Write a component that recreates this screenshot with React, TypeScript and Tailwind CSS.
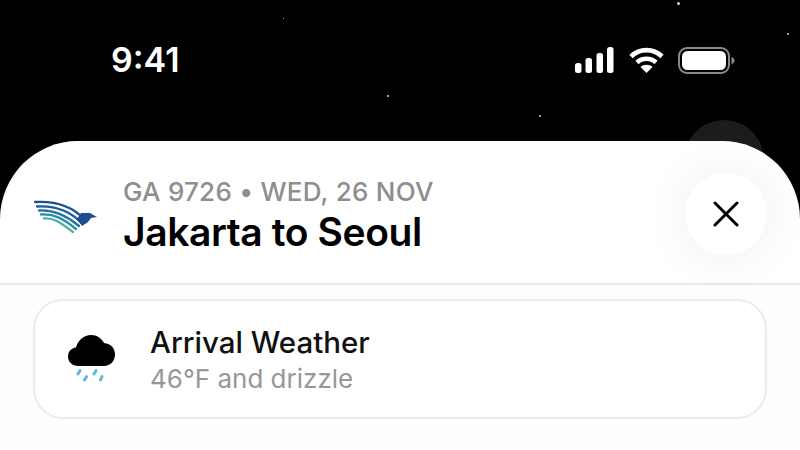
const stars = [
  [677, 2, 3],
  [787, 33, 2],
  [283, 18, 1],
  [387, 95, 2],
  [539, 115, 2],
];

const SignalIcon = () => (
  <svg width="40" height="26" viewBox="0 0 40 26" fill="white">
    <rect x="0" y="16" width="6.5" height="10" rx="2.5" />
    <rect x="10.5" y="11" width="6.5" height="15" rx="2.5" />
    <rect x="21.5" y="6" width="6.5" height="20" rx="2.5" />
    <rect x="32" y="0" width="6.5" height="26" rx="2.5" />
  </svg>
);

const WifiIcon = () => (
  <svg width="35" height="26" viewBox="0 0 35 26" fill="none" stroke="white" strokeWidth="4.6">
    <path d="M2 9.5C10.5 1 24.5 1 33 9.5" />
    <path d="M8 15.5C13 10.5 22 10.5 27 15.5" />
    <path d="M17.5 26L11.5 20C14.5 17 20.5 17 23.5 20Z" fill="white" stroke="none" />
  </svg>
);

const BatteryIcon = () => (
  <svg width="57" height="27" viewBox="0 0 57 27" fill="none">
    <rect x="1" y="1" width="50" height="25" rx="8" stroke="#8a8a8a" strokeWidth="2" />
    <rect x="4" y="4" width="44" height="19" rx="5.5" fill="white" />
    <path d="M53.5 10C55.5 10.5 56.5 12 56.5 13.5C56.5 15 55.5 16.5 53.5 17Z" fill="#8a8a8a" />
  </svg>
);

const AirlineLogo = () => (
  <svg width="64" height="34" viewBox="0 0 64 34" fill="none" strokeLinecap="round" strokeWidth="2.3">
    <path d="M1 2C19 1 37 5 50 19" stroke="#1c4f92" />
    <path d="M3 6.5C20 5.5 35 10 47.5 23" stroke="#1d5897" />
    <path d="M5 10.5C20 9.5 32 15 45 26" stroke="#21729f" />
    <path d="M7 14.5C20 13.5 30 19 42 29" stroke="#2c8fa6" />
    <path d="M10 18.5C21 17.5 28 24 39 32" stroke="#4fadad" />
    <path d="M43 19L47 13L56 13L63 17L57 18L54 22L48 26Z" fill="#1c4f92" stroke="none" />
  </svg>
);

const RainCloudIcon = () => (
  <svg width="48" height="49" viewBox="0 0 48 49">
    <path
      d="M10 31C4.5 31 0 27 0 21.5C0 16.5 3.5 13 8 12.5C10 5 16 0 23 0C29 0 33.5 3.5 36 8C43 8.5 47 13.5 47 19.5C47 26 42.5 31 36 31Z"
      fill="black"
    />
    <g stroke="#5cb9dc" strokeWidth="3" strokeLinecap="round">
      <path d="M12 35.5L10 39" />
      <path d="M18.5 41.5L16.5 45" />
      <path d="M28 35.5L26 39" />
      <path d="M34 41.5L32.5 45" />
    </g>
  </svg>
);

export default function App() {
  return (
    <div className="relative flex h-[450px] w-[800px] flex-col overflow-hidden bg-black font-['Inter',sans-serif]">
      {stars.map(([x, y, size]) => (
        <span
          key={`${x}-${y}`}
          className="absolute rounded-full bg-gray-300"
          style={{ left: x, top: y, width: size, height: size }}
        />
      ))}
      <span className="absolute left-[684px] top-[120px] h-20 w-20 rounded-full bg-[#1c1c1c]" />

      <div className="flex h-[141px] shrink-0 items-start justify-between pl-[111px] pr-[65px] pt-[40px]">
        <span className="text-[34px] font-semibold leading-10 text-white">9:41</span>
        <div className="flex items-start gap-[14px] pt-[7px]">
          <SignalIcon />
          <WifiIcon />
          <BatteryIcon />
        </div>
      </div>

      <div className="relative flex flex-1 flex-col rounded-t-[78px] bg-white">
        <div className="flex h-[144px] items-start justify-between border-b-2 border-[#e8e8e8] pl-[34px] pr-[33px]">
          <div className="flex items-start gap-[25px] pt-[37px]">
            <div className="pt-[22px]">
              <AirlineLogo />
            </div>
            <div className="flex flex-col">
              <span className="text-[26px] font-medium leading-7 tracking-[0.25px] text-[#8e8e8e]">
                GA 9726 • WED, 26 NOV
              </span>
              <span className="mt-[5px] text-[39px] font-semibold leading-[42px] tracking-[-0.4px] text-black">
                Jakarta to Seoul
              </span>
            </div>
          </div>
          <button className="mt-[32px] flex h-[82px] w-[82px] items-center justify-center rounded-full bg-white shadow-[0_0_50px_rgba(0,0,0,0.07)]">
            <svg width="26" height="26" viewBox="0 0 26 26" stroke="black" strokeWidth="3" strokeLinecap="round">
              <path d="M2 2L24 24M24 2L2 24" />
            </svg>
          </button>
        </div>

        <div className="flex-1 bg-[#fdfdfd] px-[33px] pt-[14px]">
          <div className="flex h-[120px] items-center gap-[34px] rounded-[30px] border-2 border-[#ebebeb] bg-white pl-[33px]">
            <RainCloudIcon />
            <div className="flex flex-col">
              <span className="text-[29.5px] font-medium leading-9 text-[#111]">Arrival Weather</span>
              <span className="mt-[3px] text-[26px] leading-8 text-[#979797]">46°F and drizzle</span>
            </div>
          </div>
        </div>
      </div>
    </div>
  );
}
